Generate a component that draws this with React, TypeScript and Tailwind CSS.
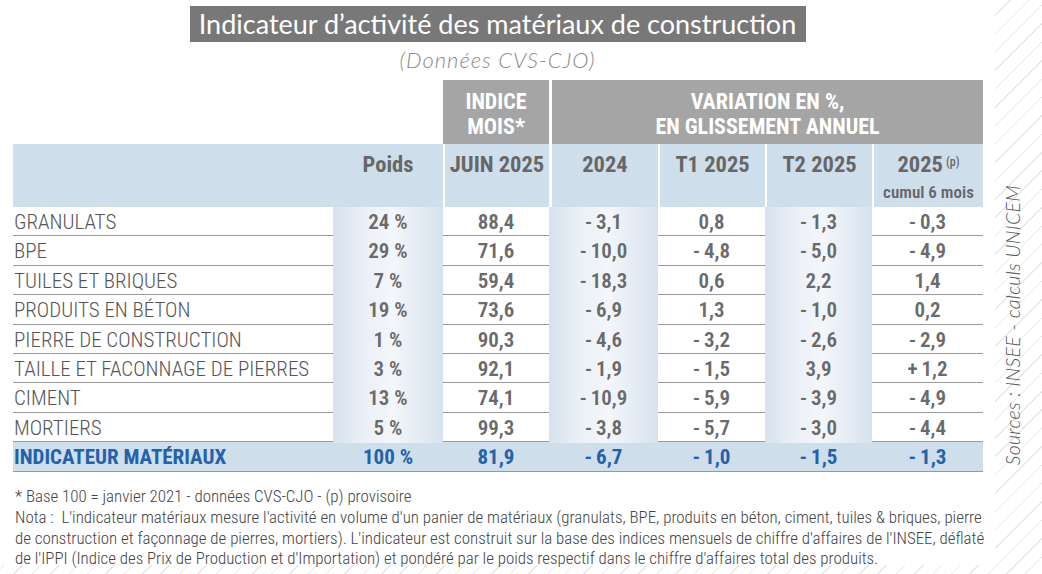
import React from "react";

type Row = { label: string; poids: string; juin: string; v: [string, string, string, string] };

const S = "-\u2009";
const rows: Row[] = [
  { label: "GRANULATS", poids: "24 %", juin: "88,4", v: [S + "3,1", "0,8", S + "1,3", S + "0,3"] },
  { label: "BPE", poids: "29 %", juin: "71,6", v: [S + "10,0", S + "4,8", S + "5,0", S + "4,9"] },
  { label: "TUILES ET BRIQUES", poids: "7 %", juin: "59,4", v: [S + "18,3", "0,6", "2,2", "1,4"] },
  { label: "PRODUITS EN BÉTON", poids: "19 %", juin: "73,6", v: [S + "6,9", "1,3", S + "1,0", "0,2"] },
  { label: "PIERRE DE CONSTRUCTION", poids: "1 %", juin: "90,3", v: [S + "4,6", S + "3,2", S + "2,6", S + "2,9"] },
  { label: "TAILLE ET FACONNAGE DE PIERRES", poids: "3 %", juin: "92,1", v: [S + "1,9", S + "1,5", "3,9", "+\u20091,2"] },
  { label: "CIMENT", poids: "13 %", juin: "74,1", v: [S + "10,9", S + "5,9", S + "3,9", S + "4,9"] },
  { label: "MORTIERS", poids: "5 %", juin: "99,3", v: [S + "3,8", S + "5,7", S + "3,0", S + "4,4"] },
];

const total: Row = { label: "INDICATEUR MATÉRIAUX", poids: "100 %", juin: "81,9", v: [S + "6,7", S + "1,0", S + "1,5", S + "1,3"] };

const shade = "bg-[linear-gradient(90deg,#d6e2ee_0%,#ecf1f7_30%,#f3f6fa_55%,#d6e2ee_100%)]";
const cols = "grid grid-cols-[320px_110px_106px_109px_107px_107px_111px]";

function BodyRow({ r }: { r: Row }) {
  return (
    <div className={`${cols} h-[29.4px] border-b border-[#9a9a9a] text-[21px] leading-[30px] text-[#6a6a6a]`}>
      <div className="pl-[1px] font-light text-[#555]">{r.label}</div>
      <div className={`${shade} text-center font-semibold`}>{r.poids}</div>
      <div className="text-center font-semibold">{r.juin}</div>
      <div className={`${shade} text-center font-semibold`}>{r.v[0]}</div>
      <div className="text-center font-semibold">{r.v[1]}</div>
      <div className={`${shade} text-center font-semibold`}>{r.v[2]}</div>
      <div className="text-center font-semibold">{r.v[3]}</div>
    </div>
  );
}

function TotalRow({ r }: { r: Row }) {
  return (
    <div className={`${cols} h-[30px] border-b border-[#9a9a9a] bg-[#cfdeeb] text-[21px] leading-[30px] font-bold text-[#2162ab]`}>
      <div className="pl-[1px]">{r.label}</div>
      <div className="text-center">{r.poids}</div>
      <div className="text-center">{r.juin}</div>
      <div className="text-center">{r.v[0]}</div>
      <div className="text-center">{r.v[1]}</div>
      <div className="text-center">{r.v[2]}</div>
      <div className="text-center">{r.v[3]}</div>
    </div>
  );
}

export default function App() {
  return (
    <div className="flex h-[574px] w-[1042px] items-start overflow-hidden bg-[repeating-linear-gradient(135deg,#ffffff_0px,#ffffff_12px,#e6e6e6_12px,#e6e6e6_13px)] font-['Open_Sans',sans-serif]">
      <div className="flex h-[565px] w-[995px] flex-col bg-white">
        {/* Title */}
        <div className="flex justify-center pt-[6px]">
          <div className="flex h-[36px] w-[616px] items-center justify-center bg-[#787878] font-['Lato',sans-serif] text-[27px] leading-[32px] text-white">
            Indicateur d’activité des matériaux de construction
          </div>
        </div>
        <div className="mt-[4px] text-center font-['Lato',sans-serif] text-[22px] font-light italic leading-[28px] tracking-[1px] text-[#8a8a8a]">
          (Données CVS-CJO)
        </div>

        {/* Table */}
        <div className="ml-[13px] mt-[6px] w-[970px] font-['Roboto_Condensed','Roboto',sans-serif] font-stretch-condensed">
          {/* header row 1 */}
          <div className={`${cols} h-[64px] text-[22px] font-bold leading-[25px] text-white`}>
            <div />
            <div />
            <div className="flex flex-col items-center justify-center bg-[#a5a5a5] pt-[4px]">
              <span>INDICE</span>
              <span>MOIS*</span>
            </div>
            <div className="col-span-4 flex flex-col items-center justify-center border-l-[3px] border-white bg-[#a5a5a5] pt-[4px]">
              <span>VARIATION EN %,</span>
              <span>EN GLISSEMENT ANNUEL</span>
            </div>
          </div>
          {/* header row 2 */}
          <div className={`${cols} h-[63px] bg-[#cfdeeb] text-[22.5px] font-bold leading-[26px] text-[#676767]`}>
            <div />
            <div className="pt-[7px] text-center">Poids</div>
            <div className="border-l-2 border-white pt-[7px] text-center">JUIN 2025</div>
            <div className="border-l-[3px] border-white pt-[7px] text-center">2024</div>
            <div className="border-l-2 border-white pt-[7px] text-center">T1 2025</div>
            <div className="border-l-2 border-white pt-[7px] text-center">T2 2025</div>
            <div className="flex flex-col items-center border-l-2 border-white pt-[7px]">
              <span>
                2025<sup className="ml-[3px] text-[12px] font-medium">(p)</sup>
              </span>
              <span className="mt-[5px] text-[17px] font-semibold leading-[20px]">cumul 6 mois</span>
            </div>
          </div>
          {rows.map((r) => (
            <BodyRow key={r.label} r={r} />
          ))}
          <TotalRow r={total} />
        </div>

        {/* Footer */}
        <div className="ml-[15px] mt-[14px] w-[966px] font-['Roboto_Condensed','Roboto',sans-serif] text-[16.9px] font-light leading-[20.7px] text-[#444] font-stretch-condensed">
          <div className="whitespace-nowrap">* Base 100 = janvier 2021 - données CVS-CJO - (p) provisoire</div>
          <div className="whitespace-nowrap text-justify [text-align-last:justify]">
            Nota :&nbsp; L'indicateur matériaux mesure l'activité en volume d'un panier de matériaux (granulats, BPE, produits en béton, ciment, tuiles &amp; briques, pierre
          </div>
          <div className="w-[962px] whitespace-nowrap text-justify [text-align-last:justify]">
            de construction et façonnage de pierres, mortiers). L'indicateur est construit sur la base des indices mensuels de chiffre d'affaires de l'INSEE, déflaté
          </div>
          <div className="whitespace-nowrap">
            de l'IPPI (Indice des Prix de Production et d'Importation) et pondéré par le poids respectif dans le chiffre d'affaires total des produits.
          </div>
        </div>
      </div>

      {/* Right strip with source */}
      <div className="flex h-[574px] flex-1 items-center pl-[7px]">
        <div className="mt-[76px] rotate-180 font-['Lato',sans-serif] text-[19.5px] font-light italic leading-[22px] tracking-[0.3px] text-[#555] [writing-mode:vertical-rl]">
          Sources : INSEE - calculs UNICEM
        </div>
      </div>
    </div>
  );
}
